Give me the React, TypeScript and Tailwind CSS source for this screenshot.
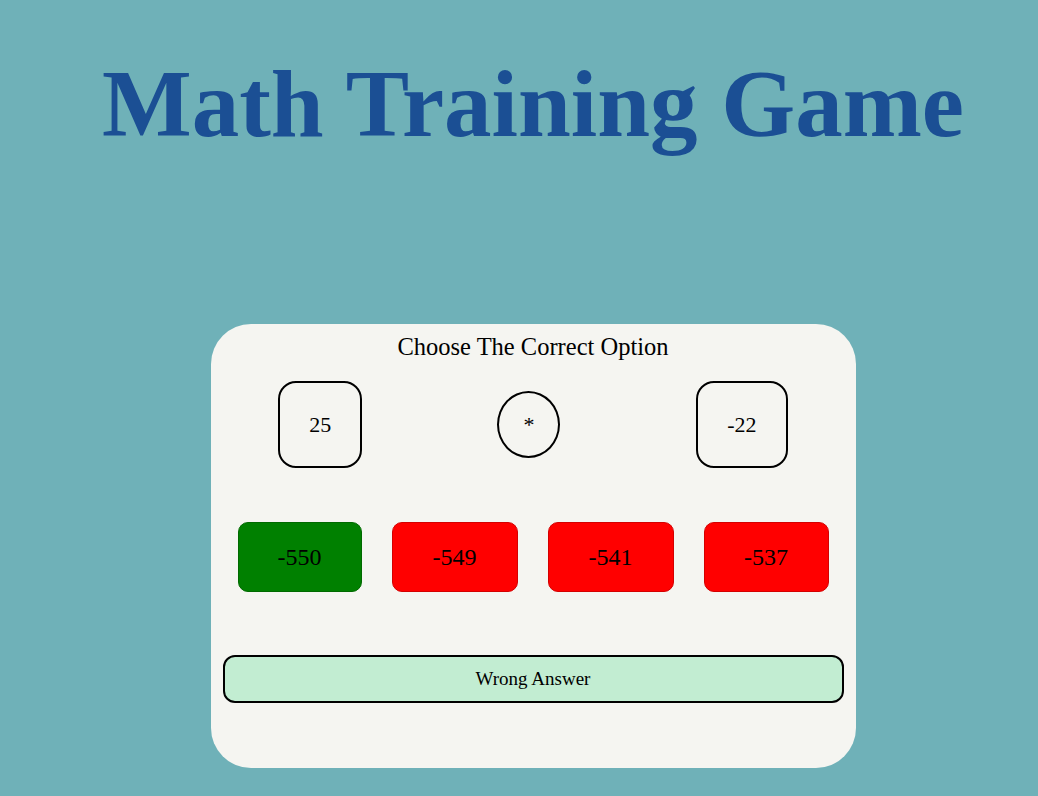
export default function App() {
  const serif = { fontFamily: '"Liberation Serif", "Times New Roman", serif' };
  return (
    <div className="min-h-[796px] w-full bg-[#6fb1b8] flex flex-col items-center pl-[28px]" style={serif}>
      <h1 className="mt-[51px] text-[95px] leading-[106px] font-bold text-[#1b4f94]">Math Training Game</h1>
      <div className="mt-[167px] w-[645px] h-[444px] bg-[#f5f5f1] rounded-[40px] flex flex-col">
        <div className="mt-[9px] text-center text-[24.5px] leading-[28px] text-black">Choose The Correct Option</div>
        <div className="mt-[20px] flex justify-around items-center">
          <div className="w-[84px] h-[87px] border-2 border-black rounded-[18px] flex items-center justify-center text-[22px]">25</div>
          <div className="w-[63px] h-[67px] border-2 border-black rounded-[50%] flex items-center justify-center text-[22px]">*</div>
          <div className="w-[92px] h-[87px] border-2 border-black rounded-[18px] flex items-center justify-center text-[22px]">-22</div>
        </div>
        <div className="mt-[54px] px-[27px] flex justify-between">
          <div className="w-[124px] h-[70px] bg-[#008000] border border-[#006a00] rounded-[10px] flex items-center justify-center text-[24px] text-black">-550</div>
          <div className="w-[126px] h-[70px] bg-[#ff0000] border border-[#d40000] rounded-[10px] flex items-center justify-center text-[24px] text-black">-549</div>
          <div className="w-[126px] h-[70px] bg-[#ff0000] border border-[#d40000] rounded-[10px] flex items-center justify-center text-[24px] text-black">-541</div>
          <div className="w-[125px] h-[70px] bg-[#ff0000] border border-[#d40000] rounded-[10px] flex items-center justify-center text-[24px] text-black">-537</div>
        </div>
        <div className="mt-[63px] mx-[12px] h-[48px] bg-[#c2edd2] border-2 border-black rounded-[12px] flex items-center justify-center text-[19px] text-black">Wrong Answer</div>
      </div>
    </div>
  );
}
